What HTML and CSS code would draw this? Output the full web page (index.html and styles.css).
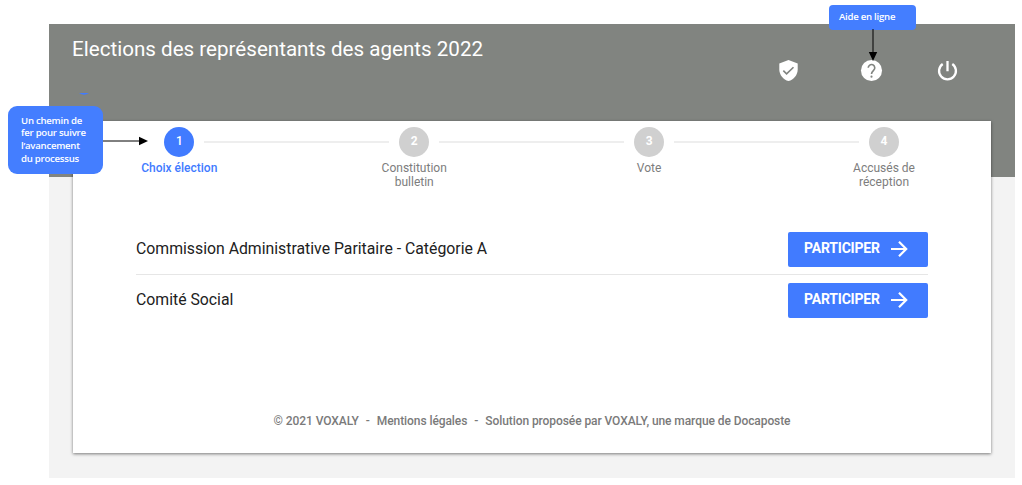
FILE: index.html
```html
<!DOCTYPE html>
<html lang="fr">
<head>
    <meta charset="UTF-8">
    <meta name="viewport" content="width=device-width, initial-scale=1.0">
    <title>Elections des représentants des agents 2022</title>
    <link rel="stylesheet" href="styles.css">
</head>
<body>
    <div class="app">
        <header class="header">
            <h1>Elections des représentants des agents 2022</h1>
            <nav class="actions">
                <svg class="icon" viewBox="0 0 24 24"><path d="M12 1L2.4 4.8V11c0 5.55 4.14 10.74 9.6 12 5.46-1.26 9.6-6.45 9.6-12V4.8L12 1z"/><path class="check" d="M6.6 12.2l3.4 3.2 7.2-6.8"/></svg>
                <svg class="icon" viewBox="0 0 24 24"><circle cx="12" cy="12" r="11"/><path class="mark" d="M8.6 9.2a3.4 3.4 0 1 1 5.7 2.5c-1.3 1.2-2.3 1.9-2.3 3.9"/><circle class="dot" cx="12" cy="18.4" r="1.1"/></svg>
                <svg class="icon" viewBox="0 0 24 24"><path class="power" d="M12 2.2v10.6M7 5.2a8.8 8.8 0 1 0 10 0"/></svg>
            </nav>
        </header>

        <main class="card">
            <div class="stepper">
                <div class="step active">
                    <span class="number">1</span>
                    <span class="label">Choix élection</span>
                </div>
                <div class="line"></div>
                <div class="step">
                    <span class="number">2</span>
                    <span class="label">Constitution bulletin</span>
                </div>
                <div class="line"></div>
                <div class="step">
                    <span class="number">3</span>
                    <span class="label">Vote</span>
                </div>
                <div class="line"></div>
                <div class="step">
                    <span class="number">4</span>
                    <span class="label">Accusés de réception</span>
                </div>
            </div>

            <div class="elections">
                <div class="election">
                    <span class="name">Commission Administrative Paritaire - Catégorie A</span>
                    <button class="btn">PARTICIPER
                        <svg viewBox="0 0 18 18"><path d="M1 9h15M9 1.8L16.2 9 9 16.2"/></svg>
                    </button>
                </div>
                <div class="election">
                    <span class="name">Comité Social</span>
                    <button class="btn">PARTICIPER
                        <svg viewBox="0 0 18 18"><path d="M1 9h15M9 1.8L16.2 9 9 16.2"/></svg>
                    </button>
                </div>
            </div>

            <footer class="footer">
                <span>© 2021 VOXALY</span>
                <span>-</span>
                <span>Mentions légales</span>
                <span>-</span>
                <span>Solution proposée par VOXALY, une marque de Docaposte</span>
            </footer>
        </main>
    </div>

    <!-- Help callouts -->
    <svg class="accent" viewBox="0 0 10 2"><path d="M0 0h10Q5 3.4 0 0z"/></svg>
    <div class="callout callout-path">Un chemin de<br>fer pour suivre<br>l’avancement<br>du processus</div>
    <svg class="arrow arrow-path" viewBox="0 0 45 10"><path class="stem" d="M0 5h38"/><path d="M36 .8L45 5l-9 4.2z"/></svg>
    <div class="callout callout-help">Aide en ligne</div>
    <svg class="arrow arrow-help" viewBox="0 0 10 32"><path class="stem" d="M5 0v25"/><path d="M.8 23h8.4L5 32z"/></svg>
</body>
</html>
```

FILE: styles.css
```css
body {
    font-family: Roboto, Arial, sans-serif;
    background-color: #fff;
    margin: 0;
    padding: 24px 7px 7px 49px;
}
.app {
    height: 454px;
    background-color: #f3f3f3;
}
.header {
    display: flex;
    justify-content: space-between;
    box-sizing: border-box;
    height: 153px;
    padding: 12px 56px 0 23px;
    background-color: #818480;
}
h1 {
    margin: 0;
    color: #fff;
    font-size: 20.6px;
    font-weight: 400;
    line-height: 26px;
}
.actions {
    display: flex;
    gap: 53px;
    padding-top: 23px;
}
.icon {
    width: 23px;
    height: 23px;
    fill: #fff;
}
.icon:nth-child(2) {
    margin-left: 7px;
}
.icon .check, .icon .mark {
    fill: none;
    stroke: #818480;
    stroke-width: 1.7;
}
.icon .power {
    fill: none;
    stroke: #fff;
    stroke-width: 2.4;
}
.icon .dot {
    fill: #818480;
}
.card {
    box-sizing: border-box;
    display: flex;
    flex-direction: column;
    height: 332px;
    margin: -56px 24px 0;
    background-color: #fff;
    box-shadow: 0 1px 3px rgba(0, 0, 0, 0.5);
}
.stepper {
    display: flex;
    align-items: flex-start;
    height: 103px;
    padding: 5.5px 82px 0 81.3px;
    box-sizing: border-box;
}
.step {
    display: flex;
    flex-direction: column;
    align-items: center;
    width: 50px;
}
.number {
    width: 30px;
    height: 30px;
    border-radius: 50%;
    background-color: #d0d0d0;
    color: #fff;
    font-size: 12px;
    font-weight: 700;
    line-height: 29px;
    text-align: center;
}
.label {
    width: 90px;
    margin-top: 4px;
    color: #7d7d7d;
    font-size: 12px;
    line-height: 14px;
    text-align: center;
}
.active .number {
    background-color: #417bff;
    font-weight: 500;
}
.active .label {
    color: #417bff;
    font-weight: 500;
}
.line {
    flex: 1;
    height: 2px;
    margin-top: 14.5px;
    background-color: #eee;
}
.elections {
    padding: 0 63px;
}
.election {
    display: flex;
    align-items: center;
    justify-content: space-between;
    height: 51px;
}
.election + .election {
    box-shadow: 0 -1px 0 #e6e6e6;
}
.name {
    padding-bottom: 2px;
    color: #212121;
    font-size: 15.8px;
}
.btn {
    display: flex;
    align-items: center;
    gap: 10px;
    width: 140px;
    height: 35px;
    padding: 0 0 3px 16px;
    border: none;
    border-radius: 2px;
    background-color: #417bff;
    color: #fff;
    font-family: inherit;
    font-size: 14px;
    font-weight: 700;
    letter-spacing: -0.2px;
    cursor: pointer;
}
.btn svg {
    width: 18px;
    height: 18px;
    padding-top: 2px;
    fill: none;
    stroke: #fff;
    stroke-width: 2.2;
}
.footer {
    display: flex;
    justify-content: center;
    gap: 7px;
    margin-top: auto;
    padding-bottom: 24px;
    color: #7a7a7a;
    font-size: 12px;
    font-weight: 500;
    line-height: 16px;
    letter-spacing: -0.08px;
}
.callout {
    position: absolute;
    box-sizing: border-box;
    background-color: #447eff;
    color: #fff;
    font-family: "Open Sans", "Noto Sans", sans-serif;
    font-size: 9.6px;
    font-weight: 600;
    line-height: 12.8px;
    letter-spacing: -0.25px;
}
.callout-path {
    left: 8px;
    top: 106px;
    width: 95px;
    height: 68px;
    padding: 8.5px 0 0 13px;
    border-radius: 9px;
}
.callout-help {
    left: 829px;
    top: 5px;
    width: 87px;
    height: 25px;
    padding: 6px 0 0 10px;
    border-radius: 4px;
}
.arrow {
    position: absolute;
}
.arrow .stem {
    stroke: #000;
    stroke-width: 1;
}
.arrow-path {
    left: 103px;
    top: 135.5px;
    width: 45px;
    height: 10px;
}
.arrow-help {
    left: 867.5px;
    top: 29px;
    width: 10px;
    height: 32px;
}
.accent {
    position: absolute;
    left: 79px;
    top: 93px;
    width: 10px;
    height: 2px;
    fill: #417bff;
}
```
